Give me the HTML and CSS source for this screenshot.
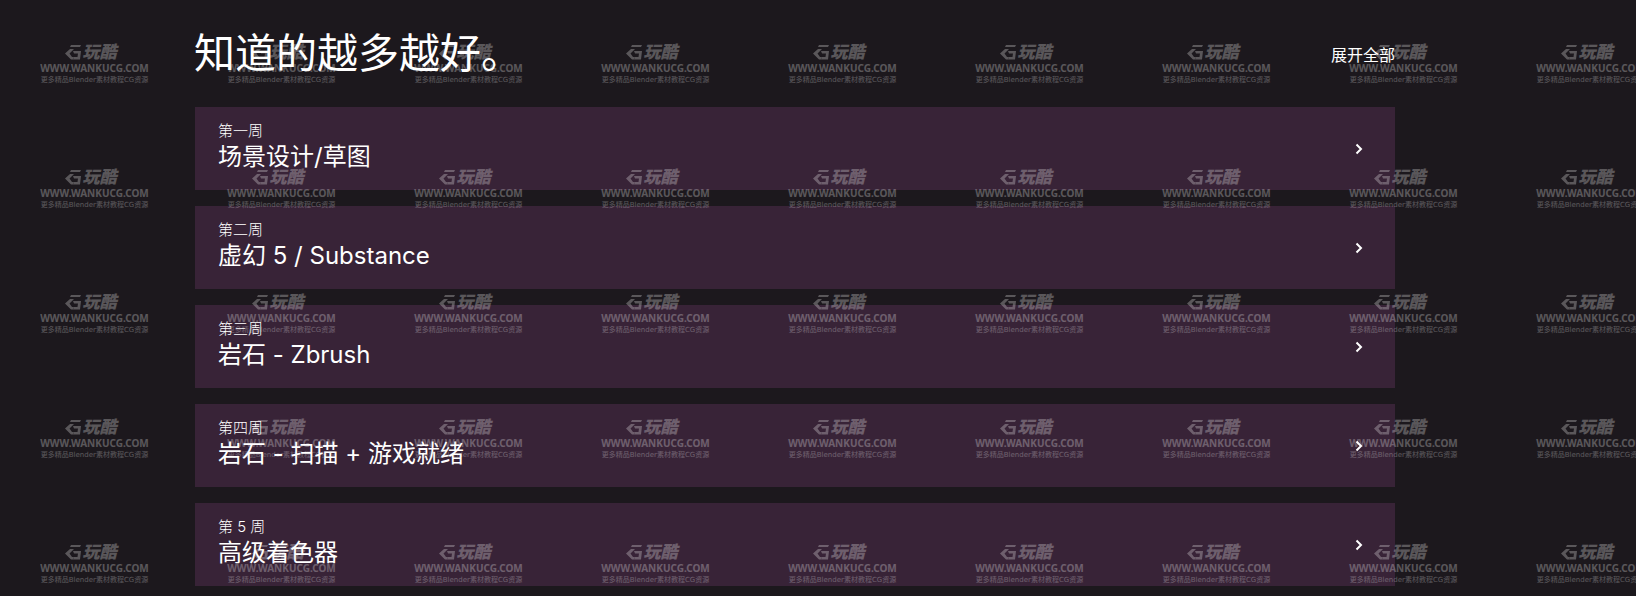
FILE: index.html
```html
<!DOCTYPE html>
<html lang="zh-Hans">
<head>
  <meta charset="UTF-8">
  <meta name="viewport" content="width=device-width, initial-scale=1">
  <title>知道的越多越好。</title>
  <link rel="stylesheet" href="styles.css">
</head>
<body>
  <svg class="sprite" aria-hidden="true">
    <symbol id="chevron" viewBox="0 0 8 12">
      <path d="M1.5 1.5 6 6 1.5 10.5" fill="none" stroke="currentColor" stroke-width="2"/>
    </symbol>
    <symbol id="mark" viewBox="0 0 16 15">
      <path d="M6 0h10l-1 2H5z"/>
      <path d="M5 4h4L4.500 8.500 7 12h1l1 2.500H6L0 8.500z"/>
      <path d="M8 6h8l-1 8.500H9L8 12h4.500l.5-3.500H9z"/>
    </symbol>
  </svg>

  <main class="syllabus">
    <header class="syllabus-header">
      <h1>知道的越多越好。</h1>
      <button type="button" class="expand-all">展开全部</button>
    </header>

    <div class="weeks">
      <button type="button" class="week">
        <span class="week-text">
          <span class="week-label">第一周</span>
          <span class="week-title">场景设计/草图</span>
        </span>
        <svg class="chevron"><use href="#chevron"/></svg>
      </button>
      <button type="button" class="week">
        <span class="week-text">
          <span class="week-label">第二周</span>
          <span class="week-title">虚幻 5 / Substance</span>
        </span>
        <svg class="chevron"><use href="#chevron"/></svg>
      </button>
      <button type="button" class="week">
        <span class="week-text">
          <span class="week-label">第三周</span>
          <span class="week-title">岩石 - Zbrush</span>
        </span>
        <svg class="chevron"><use href="#chevron"/></svg>
      </button>
      <button type="button" class="week">
        <span class="week-text">
          <span class="week-label">第四周</span>
          <span class="week-title">岩石 - 扫描 + 游戏就绪</span>
        </span>
        <svg class="chevron"><use href="#chevron"/></svg>
      </button>
      <button type="button" class="week">
        <span class="week-text">
          <span class="week-label">第 5 周</span>
          <span class="week-title">高级着色器</span>
        </span>
        <svg class="chevron"><use href="#chevron"/></svg>
      </button>
    </div>
  </main>

  <div class="watermarks" id="watermarks" aria-hidden="true"></div>

  <template id="watermark">
    <div class="watermark">
      <div class="wm-logo"><svg class="wm-mark"><use href="#mark"/></svg><span>玩酷</span></div>
      <div class="wm-url">WWW.WANKUCG.COM</div>
      <div class="wm-tagline">更多精品Blender素材教程CG资源</div>
    </div>
  </template>

  <script>
    // 用水印铺满整个窗口
    const layer = document.getElementById('watermarks');
    const tile = document.getElementById('watermark');

    function fillWatermarks() {
      const cols = Math.ceil(window.innerWidth / 187);
      const rows = Math.ceil(window.innerHeight / 125);
      layer.style.setProperty('--cols', cols);
      layer.replaceChildren();
      for (let i = 0; i < cols * rows; i++) {
        layer.appendChild(tile.content.cloneNode(true));
      }
    }

    fillWatermarks();
    window.addEventListener('resize', fillWatermarks);
  </script>
</body>
</html>
```
FILE: styles.css
```css
* {
  box-sizing: border-box;
}
body {
  margin: 0;
  position: relative;
  min-height: 100vh;
  overflow-x: hidden;
  background: #1c181d;
  color: #fff;
  font-family: Inter, "Noto Sans CJK SC", sans-serif;
}
button {
  border: none;
  background: none;
  color: inherit;
  font-family: inherit;
  cursor: pointer;
}
.sprite {
  display: none;
}

/* 课程大纲 */
.syllabus {
  padding: 22px 241px 10px 194px;
}
.syllabus-header {
  display: flex;
  justify-content: space-between;
  align-items: center;
  margin-bottom: 23px;
}
h1 {
  margin: 0;
  font-size: 41px;
  line-height: 62px;
  font-weight: 400;
}
.expand-all {
  padding: 4px 0 0;
  font-size: 16px;
  line-height: 24px;
}
.weeks {
  display: flex;
  flex-direction: column;
  gap: 16px;
  margin-left: 1px;
}
.week {
  display: flex;
  justify-content: space-between;
  align-items: center;
  padding: 14px 32px 14px 23px;
  background: #382337;
  text-align: left;
}
.week:hover {
  background: #432a42;
}
.week-text {
  display: flex;
  flex-direction: column;
  padding-bottom: 3px;
}
.week-label {
  font-size: 15px;
  line-height: 20px;
  font-weight: 300;
}
.week-title {
  font-size: 24px;
  line-height: 32px;
}
.chevron {
  width: 8px;
  height: 12px;
}

/* 水印层 */
.watermarks {
  position: absolute;
  inset: 0;
  overflow: hidden;
  display: grid;
  grid-template-columns: repeat(var(--cols), 187px);
  grid-auto-rows: 125px;
  color: #fff;
  opacity: 0.27;
  pointer-events: none;
}
.watermark {
  display: flex;
  flex-direction: column;
  align-items: center;
  padding: 43px 0 0 2px;
  white-space: nowrap;
}
.wm-logo {
  display: flex;
  align-items: center;
  gap: 2px;
  height: 18px;
  padding-right: 8px;
  font-size: 17px;
  line-height: 18px;
  font-weight: 900;
  font-style: italic;
}
.wm-mark {
  width: 16px;
  height: 15px;
  fill: currentColor;
}
.wm-url {
  font-family: "Noto Sans", sans-serif;
  font-size: 10px;
  line-height: 14px;
  font-weight: 700;
}
.wm-tagline {
  font-family: "DejaVu Sans", "Noto Sans CJK SC", sans-serif;
  font-size: 7px;
  line-height: 10px;
}
```
